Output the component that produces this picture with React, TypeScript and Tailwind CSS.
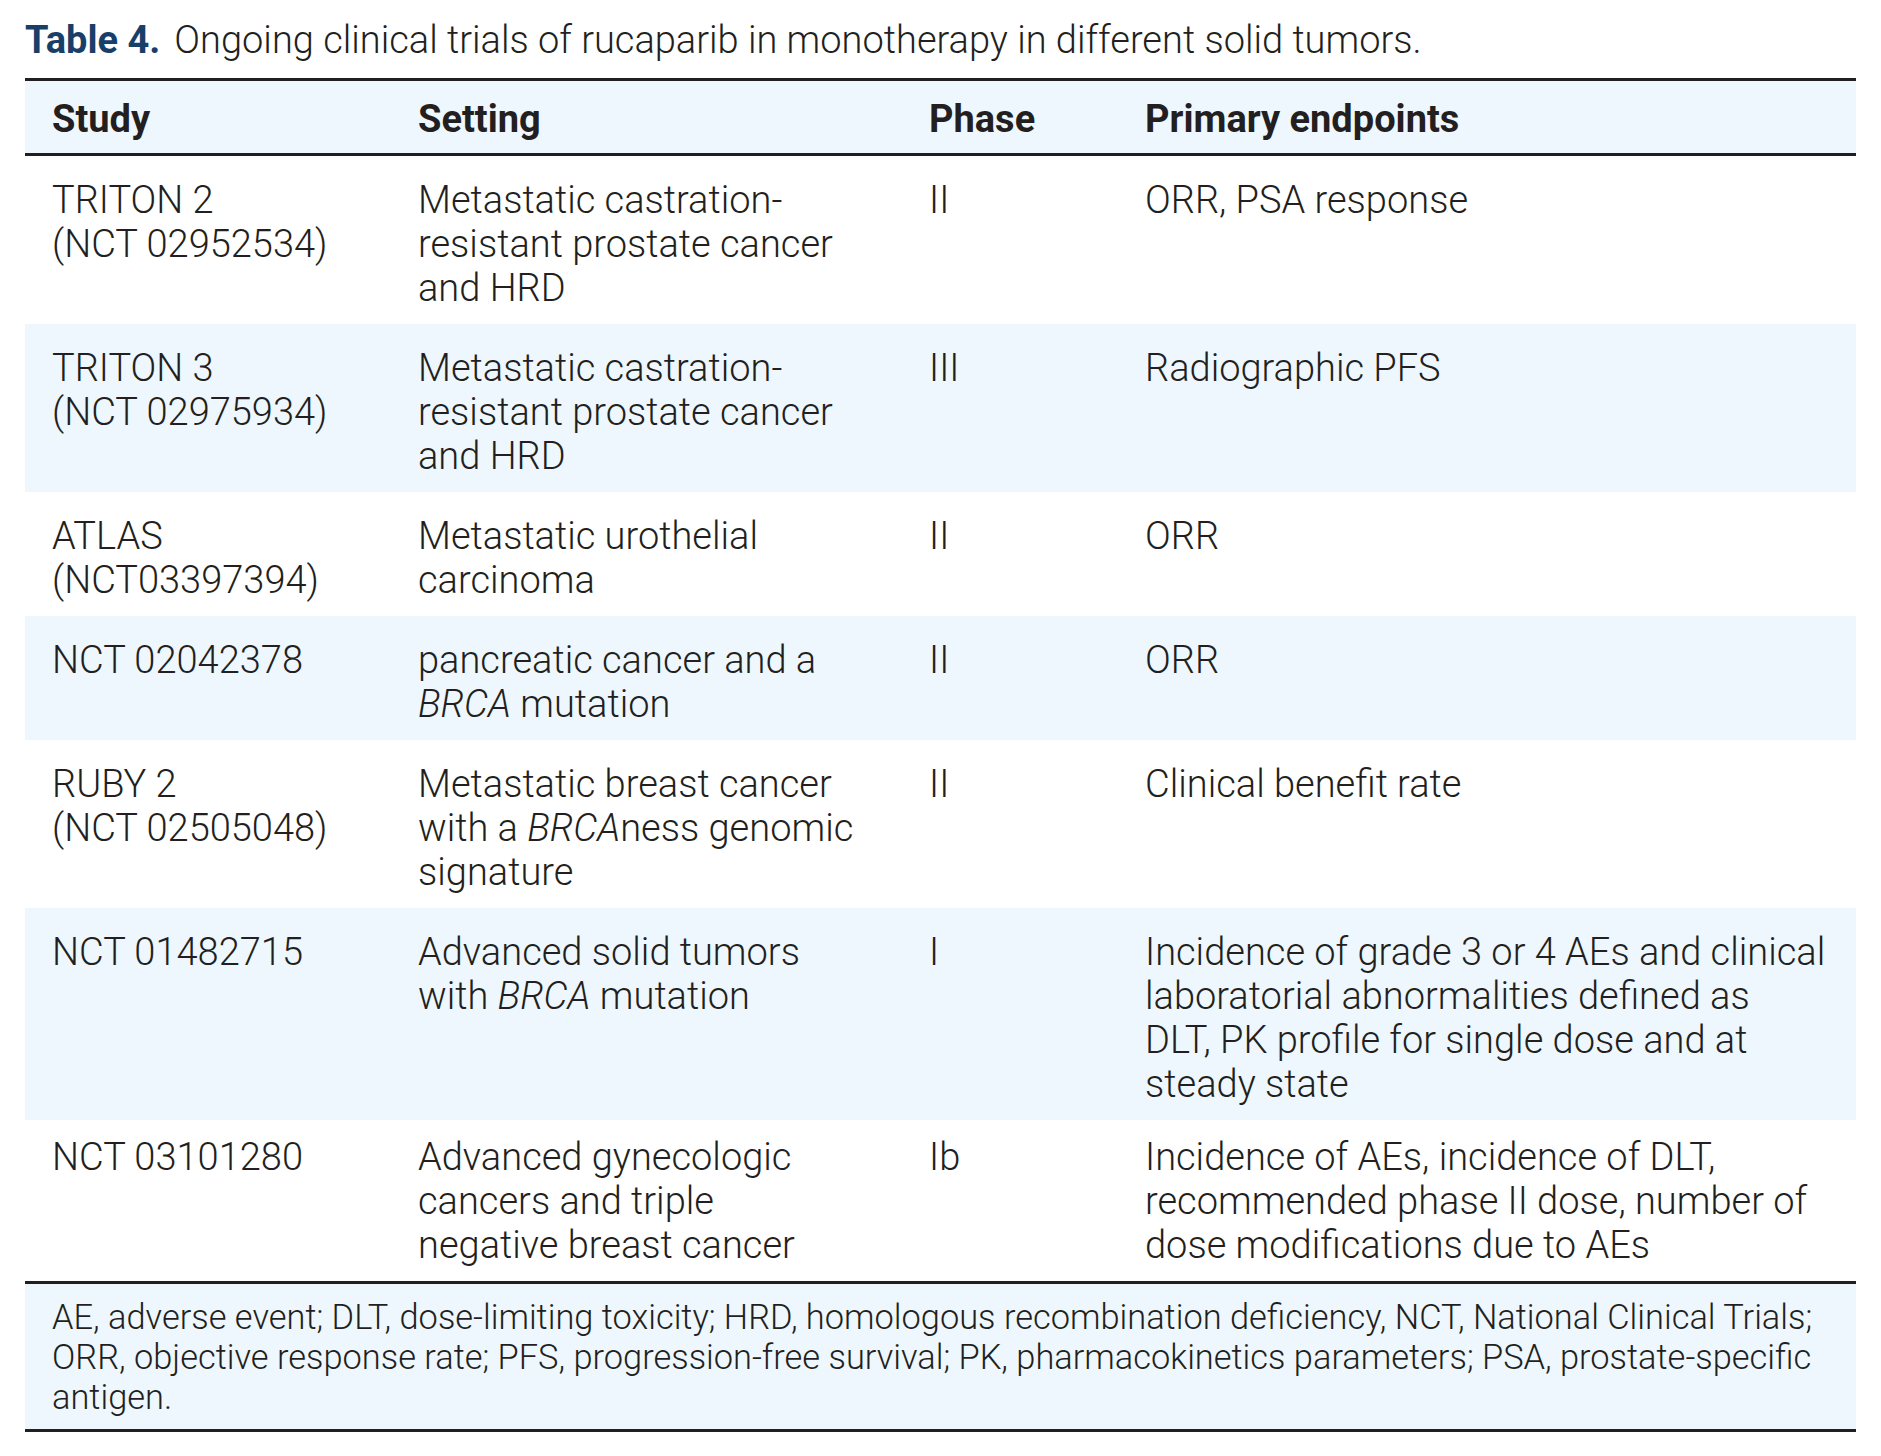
const rows: { study: React.ReactNode; setting: React.ReactNode; phase: string; endpoints: React.ReactNode; shade: boolean }[] = [
  {
    study: <>TRITON 2<br />(NCT 02952534)</>,
    setting: <>Metastatic castration-<br />resistant prostate cancer<br />and HRD</>,
    phase: "II",
    endpoints: <>ORR, PSA response</>,
    shade: false,
  },
  {
    study: <>TRITON 3<br />(NCT 02975934)</>,
    setting: <>Metastatic castration-<br />resistant prostate cancer<br />and HRD</>,
    phase: "III",
    endpoints: <>Radiographic PFS</>,
    shade: true,
  },
  {
    study: <>ATLAS<br />(NCT03397394)</>,
    setting: <>Metastatic urothelial<br />carcinoma</>,
    phase: "II",
    endpoints: <>ORR</>,
    shade: false,
  },
  {
    study: <>NCT 02042378</>,
    setting: <>pancreatic cancer and a<br /><i>BRCA</i> mutation</>,
    phase: "II",
    endpoints: <>ORR</>,
    shade: true,
  },
  {
    study: <>RUBY 2<br />(NCT 02505048)</>,
    setting: <>Metastatic breast cancer<br />with a <i>BRCA</i>ness genomic<br />signature</>,
    phase: "II",
    endpoints: <>Clinical benefit rate</>,
    shade: false,
  },
  {
    study: <>NCT 01482715</>,
    setting: <>Advanced solid tumors<br />with <i>BRCA</i> mutation</>,
    phase: "I",
    endpoints: (
      <>
        Incidence of grade 3 or 4 AEs and clinical<br />laboratorial abnormalities defined as<br />DLT, PK profile for single dose and at<br />steady state
      </>
    ),
    shade: true,
  },
  {
    study: <>NCT 03101280</>,
    setting: <>Advanced gynecologic<br />cancers and triple<br />negative breast cancer</>,
    phase: "Ib",
    endpoints: (
      <>
        Incidence of AEs, incidence of DLT,<br />recommended phase II dose, number of<br />dose modifications due to AEs
      </>
    ),
    shade: false,
  },
];

const cols = "grid grid-cols-[366px_511px_216px_1fr] pl-[27px] pr-4";

export default function App() {
  return (
    <div
      className="min-h-screen bg-white text-[#231f20] pt-[18px] pl-[25px] pr-[25px]"
      style={{ fontFamily: "Roboto, 'Liberation Sans', sans-serif" }}
    >
      <h1 className="text-[38px] leading-[44px] whitespace-nowrap">
        <span className="font-bold text-[#183f69]">Table 4.</span>
        <span className="ml-[14px] font-light">Ongoing clinical trials of rucaparib in monotherapy in different solid tumors.</span>
      </h1>

      <div className="mt-[16px] border-t-[3px] border-b-[3px] border-[#231f20] w-[1831px]">
        <div className={`${cols} bg-[#eef7fd] h-[75px] pt-[4px] items-center text-[38px] leading-[44px] font-bold border-b-[3px] border-[#231f20]`}>
          <div>Study</div>
          <div>Setting</div>
          <div>Phase</div>
          <div>Primary endpoints</div>
        </div>

        {rows.map((r, i) => (
          <div
            key={i}
            className={`${cols} text-[38px] leading-[44px] font-light whitespace-nowrap ${
              i === rows.length - 1 ? "pt-[15px]" : "pt-[22px]"
            } pb-[14px] ${r.shade ? "bg-[#eef7fd]" : "bg-white"}`}
          >
            <div>{r.study}</div>
            <div>{r.setting}</div>
            <div>{r.phase}</div>
            <div>{r.endpoints}</div>
          </div>
        ))}

        <div className="bg-[#eef7fd] border-t-[3px] border-[#231f20] pl-[27px] pr-4 pt-[13px] pb-[12px] text-[34.4px] leading-[40px] font-light whitespace-nowrap">
          AE, adverse event; DLT, dose-limiting toxicity; HRD, homologous recombination deficiency, NCT, National Clinical Trials;
          <br />
          ORR, objective response rate; PFS, progression-free survival; PK, pharmacokinetics parameters; PSA, prostate-specific
          <br />
          antigen.
        </div>
      </div>
    </div>
  );
}
